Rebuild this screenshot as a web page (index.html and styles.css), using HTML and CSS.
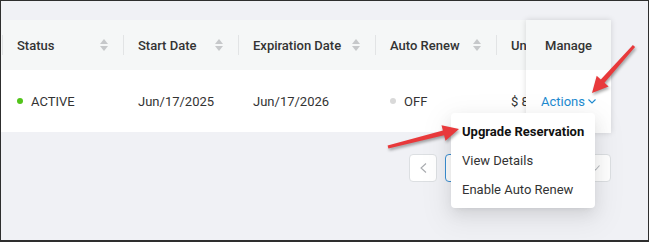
FILE: index.html
```html
<!DOCTYPE html>
<html lang="en">

<head>
    <meta charset="UTF-8">
    <meta name="viewport" content="width=device-width, initial-scale=1.0">
    <title>Reservations</title>
    <link rel="stylesheet" href="styles.css">
</head>

<body>
    <div class="frame">
        <div class="table">
            <!-- scrolling part of the table -->
            <div class="scroll">
                <div class="thead">
                    <div class="th c1"><span>Status</span>
                        <svg class="sorter" viewBox="0 0 8 12"><polygon points="4,0 8,5 0,5" /><polygon points="0,7 8,7 4,12" /></svg>
                    </div>
                    <div class="th c2"><span>Start Date</span>
                        <svg class="sorter" viewBox="0 0 8 12"><polygon points="4,0 8,5 0,5" /><polygon points="0,7 8,7 4,12" /></svg>
                    </div>
                    <div class="th c3"><span>Expiration Date</span>
                        <svg class="sorter" viewBox="0 0 8 12"><polygon points="4,0 8,5 0,5" /><polygon points="0,7 8,7 4,12" /></svg>
                    </div>
                    <div class="th c4"><span>Auto Renew</span>
                        <svg class="sorter" viewBox="0 0 8 12"><polygon points="4,0 8,5 0,5" /><polygon points="0,7 8,7 4,12" /></svg>
                    </div>
                    <div class="th c5"><span>Unit Price</span></div>
                </div>
                <div class="trow">
                    <div class="td c1"><span class="dot green"></span>ACTIVE</div>
                    <div class="td c2">Jun/17/2025</div>
                    <div class="td c3">Jun/17/2026</div>
                    <div class="td c4"><span class="dot gray"></span>OFF</div>
                    <div class="td c5">$ 89.00</div>
                </div>
            </div>
            <!-- fixed right column -->
            <div class="fixed">
                <div class="th center">Manage</div>
                <div class="td center">
                    <a class="actions">Actions
                        <svg class="chev" viewBox="0 0 8 5"><polyline points="0.5,0.5 4,4 7.5,0.5" /></svg>
                    </a>
                    <ul class="menu">
                        <li class="strong">Upgrade Reservation</li>
                        <li>View Details</li>
                        <li>Enable Auto Renew</li>
                    </ul>
                </div>
            </div>
        </div>

        <div class="pager">
            <span class="page-btn">
                <svg class="prev" viewBox="0 0 7 10"><polyline points="6,0.5 1,5 6,9.5" /></svg>
            </span>
            <span class="page-btn current">1</span>
            <span class="page-btn">
                <svg class="prev" viewBox="0 0 7 10"><polyline points="1,0.5 6,5 1,9.5" /></svg>
            </span>
            <span class="size-select">10 / page
                <svg class="down" viewBox="0 0 9 6"><polyline points="0.5,0.5 4.5,5 8.5,0.5" /></svg>
            </span>
        </div>

        <!-- annotation arrows -->
        <svg class="arrows" viewBox="0 0 649 242">
            <polygon points="635.1,47 604.5,82.7 608.6,86.4 592,93 596.7,75.7 600.8,79.4 632.9,45" />
            <polygon points="388.4,148.5 444.1,135.3 445.5,140.7 459,129 441.5,125.2 442.9,130.5 387.6,145.5" />
        </svg>
    </div>
</body>

</html>
```

FILE: styles.css
```css
body {
    margin: 0;
    font-family: Roboto, "Liberation Sans", sans-serif;
}

.frame {
    position: relative;
    width: 649px;
    height: 242px;
    box-sizing: border-box;
    border: 1px solid #2e2e2e;
    border-bottom-width: 2px;
    background: #f0f1f5;
    padding-top: 19px;
    overflow: hidden;
}

.table {
    display: flex;
    width: 610px;
}

.scroll {
    width: 525px;
    overflow: hidden;
}

.thead,
.trow {
    display: flex;
    width: max-content;
}

.th,
.td {
    flex: none;
    display: flex;
    align-items: center;
    box-sizing: border-box;
    padding: 0 15px;
    font-size: 13px;
    color: #333;
}

.th {
    position: relative;
    height: 50px;
    justify-content: space-between;
    background: #f5f7f7;
    font-weight: 500;
}

.th::before {
    content: "";
    position: absolute;
    left: 0;
    top: 15px;
    width: 1px;
    height: 20px;
    background: #e2e4e5;
}

.td {
    height: 62px;
    background: #fff;
}

.c1 {
    width: 122px;
    padding-left: 16px;
}

.th.c1::before {
    left: 1px;
}

.c2 {
    width: 115px;
}

.c3 {
    width: 137px;
}

.c4 {
    width: 121px;
}

.c5 {
    width: 120px;
}

.sorter {
    width: 8px;
    height: 12px;
    fill: #c6c8ca;
}

.dot {
    width: 6px;
    height: 6px;
    border-radius: 50%;
    margin-right: 8px;
}

.dot.green {
    background: #52c41a;
}

.dot.gray {
    background: #d9d9d9;
}

.fixed {
    position: relative;
    z-index: 1;
    width: 85px;
    box-shadow: 0 0 6px rgba(0, 0, 0, 0.14);
}

.fixed .th::before {
    display: none;
}

.fixed .center {
    justify-content: center;
}

.fixed .td {
    position: relative;
    height: 63px;
}

.actions {
    display: flex;
    align-items: center;
    color: #1d8ad0;
    cursor: pointer;
}

.chev {
    width: 8px;
    height: 5px;
    margin-left: 3px;
    fill: none;
    stroke: #1d8ad0;
    stroke-width: 1.1;
}

.menu {
    position: absolute;
    top: 43px;
    left: -75px;
    width: 144px;
    margin: 0;
    padding: 4px 0;
    list-style: none;
    background: #fff;
    border-radius: 4px;
    box-shadow: 0 3px 6px -4px rgba(0, 0, 0, 0.12), 0 6px 16px 0 rgba(0, 0, 0, 0.08), 0 9px 28px 8px rgba(0, 0, 0, 0.05);
}

.menu li {
    height: 29px;
    line-height: 29px;
    padding: 0 11px;
    font-size: 13px;
    color: #333;
    white-space: nowrap;
}

.menu li.strong {
    font-weight: 700;
    color: #111;
}

.pager {
    display: flex;
    justify-content: flex-end;
    gap: 8px;
    width: 610px;
    margin-top: 21px;
}

.page-btn {
    display: flex;
    align-items: center;
    justify-content: center;
    width: 28px;
    height: 28px;
    box-sizing: border-box;
    border: 1px solid #dcdfe2;
    border-radius: 4px;
    background: #fff;
    font-size: 13px;
    color: #333;
}

.page-btn.current {
    border-color: #3a8fd3;
    color: #3a8fd3;
}

.prev {
    width: 7px;
    height: 10px;
    fill: none;
    stroke: #a8abaf;
    stroke-width: 1.1;
}

.size-select {
    display: flex;
    align-items: center;
    justify-content: space-between;
    width: 94px;
    height: 28px;
    box-sizing: border-box;
    padding: 0 10px;
    border: 1px solid #dcdfe2;
    border-radius: 4px;
    background: #fff;
    font-size: 13px;
    color: #333;
}

.down {
    width: 9px;
    height: 6px;
    fill: none;
    stroke: #b8bbbf;
    stroke-width: 1.1;
}

.arrows {
    position: absolute;
    top: -1px;
    left: -1px;
    width: 649px;
    height: 242px;
    z-index: 10;
    pointer-events: none;
    fill: #e8393b;
    filter: drop-shadow(1px 2px 1.5px rgba(0, 0, 0, 0.35));
}
```
